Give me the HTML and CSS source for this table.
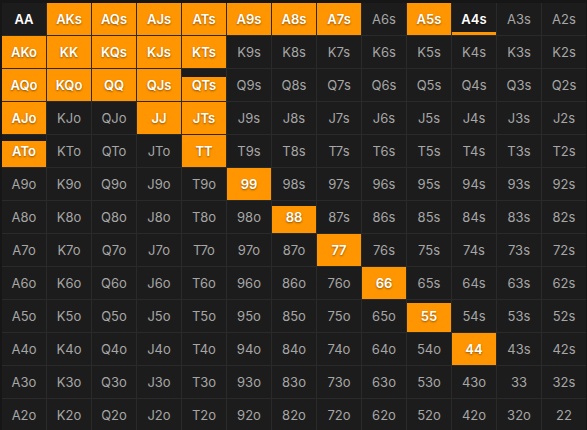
FILE: index.html
```html
<!DOCTYPE html>
<html lang="en">
<head>
<meta charset="utf-8">
<title>Range chart</title>
<link rel="stylesheet" href="styles.css">
</head>
<body>
<div class="wrap">
<div class="grid">
<div class="c hi"><span>AA</span></div>
<div class="c on"><span>AKs</span></div>
<div class="c on"><span>AQs</span></div>
<div class="c on"><span>AJs</span></div>
<div class="c on"><span>ATs</span></div>
<div class="c on"><span>A9s</span></div>
<div class="c on"><span>A8s</span></div>
<div class="c on"><span>A7s</span></div>
<div class="c"><span>A6s</span></div>
<div class="c on"><span>A5s</span></div>
<div class="c hi"><i class="fill" style="height:10%"></i><span>A4s</span></div>
<div class="c"><span>A3s</span></div>
<div class="c"><span>A2s</span></div>

<div class="c on"><span>AKo</span></div>
<div class="c on"><span>KK</span></div>
<div class="c on"><span>KQs</span></div>
<div class="c on"><span>KJs</span></div>
<div class="c on"><span>KTs</span></div>
<div class="c"><span>K9s</span></div>
<div class="c"><span>K8s</span></div>
<div class="c"><span>K7s</span></div>
<div class="c"><span>K6s</span></div>
<div class="c"><span>K5s</span></div>
<div class="c"><span>K4s</span></div>
<div class="c"><span>K3s</span></div>
<div class="c"><span>K2s</span></div>

<div class="c on"><span>AQo</span></div>
<div class="c on"><span>KQo</span></div>
<div class="c on"><span>QQ</span></div>
<div class="c on"><span>QJs</span></div>
<div class="c hi"><i class="fill" style="height:75%"></i><span>QTs</span></div>
<div class="c"><span>Q9s</span></div>
<div class="c"><span>Q8s</span></div>
<div class="c"><span>Q7s</span></div>
<div class="c"><span>Q6s</span></div>
<div class="c"><span>Q5s</span></div>
<div class="c"><span>Q4s</span></div>
<div class="c"><span>Q3s</span></div>
<div class="c"><span>Q2s</span></div>

<div class="c on"><span>AJo</span></div>
<div class="c"><span>KJo</span></div>
<div class="c"><span>QJo</span></div>
<div class="c on"><span>JJ</span></div>
<div class="c on"><span>JTs</span></div>
<div class="c"><span>J9s</span></div>
<div class="c"><span>J8s</span></div>
<div class="c"><span>J7s</span></div>
<div class="c"><span>J6s</span></div>
<div class="c"><span>J5s</span></div>
<div class="c"><span>J4s</span></div>
<div class="c"><span>J3s</span></div>
<div class="c"><span>J2s</span></div>

<div class="c hi"><i class="fill" style="height:80%"></i><span>ATo</span></div>
<div class="c"><span>KTo</span></div>
<div class="c"><span>QTo</span></div>
<div class="c"><span>JTo</span></div>
<div class="c on"><span>TT</span></div>
<div class="c"><span>T9s</span></div>
<div class="c"><span>T8s</span></div>
<div class="c"><span>T7s</span></div>
<div class="c"><span>T6s</span></div>
<div class="c"><span>T5s</span></div>
<div class="c"><span>T4s</span></div>
<div class="c"><span>T3s</span></div>
<div class="c"><span>T2s</span></div>

<div class="c"><span>A9o</span></div>
<div class="c"><span>K9o</span></div>
<div class="c"><span>Q9o</span></div>
<div class="c"><span>J9o</span></div>
<div class="c"><span>T9o</span></div>
<div class="c on"><span>99</span></div>
<div class="c"><span>98s</span></div>
<div class="c"><span>97s</span></div>
<div class="c"><span>96s</span></div>
<div class="c"><span>95s</span></div>
<div class="c"><span>94s</span></div>
<div class="c"><span>93s</span></div>
<div class="c"><span>92s</span></div>

<div class="c"><span>A8o</span></div>
<div class="c"><span>K8o</span></div>
<div class="c"><span>Q8o</span></div>
<div class="c"><span>J8o</span></div>
<div class="c"><span>T8o</span></div>
<div class="c"><span>98o</span></div>
<div class="c hi"><i class="fill" style="height:84%"></i><span>88</span></div>
<div class="c"><span>87s</span></div>
<div class="c"><span>86s</span></div>
<div class="c"><span>85s</span></div>
<div class="c"><span>84s</span></div>
<div class="c"><span>83s</span></div>
<div class="c"><span>82s</span></div>

<div class="c"><span>A7o</span></div>
<div class="c"><span>K7o</span></div>
<div class="c"><span>Q7o</span></div>
<div class="c"><span>J7o</span></div>
<div class="c"><span>T7o</span></div>
<div class="c"><span>97o</span></div>
<div class="c"><span>87o</span></div>
<div class="c on"><span>77</span></div>
<div class="c"><span>76s</span></div>
<div class="c"><span>75s</span></div>
<div class="c"><span>74s</span></div>
<div class="c"><span>73s</span></div>
<div class="c"><span>72s</span></div>

<div class="c"><span>A6o</span></div>
<div class="c"><span>K6o</span></div>
<div class="c"><span>Q6o</span></div>
<div class="c"><span>J6o</span></div>
<div class="c"><span>T6o</span></div>
<div class="c"><span>96o</span></div>
<div class="c"><span>86o</span></div>
<div class="c"><span>76o</span></div>
<div class="c on"><span>66</span></div>
<div class="c"><span>65s</span></div>
<div class="c"><span>64s</span></div>
<div class="c"><span>63s</span></div>
<div class="c"><span>62s</span></div>

<div class="c"><span>A5o</span></div>
<div class="c"><span>K5o</span></div>
<div class="c"><span>Q5o</span></div>
<div class="c"><span>J5o</span></div>
<div class="c"><span>T5o</span></div>
<div class="c"><span>95o</span></div>
<div class="c"><span>85o</span></div>
<div class="c"><span>75o</span></div>
<div class="c"><span>65o</span></div>
<div class="c hi"><i class="fill" style="height:90%"></i><span>55</span></div>
<div class="c"><span>54s</span></div>
<div class="c"><span>53s</span></div>
<div class="c"><span>52s</span></div>

<div class="c"><span>A4o</span></div>
<div class="c"><span>K4o</span></div>
<div class="c"><span>Q4o</span></div>
<div class="c"><span>J4o</span></div>
<div class="c"><span>T4o</span></div>
<div class="c"><span>94o</span></div>
<div class="c"><span>84o</span></div>
<div class="c"><span>74o</span></div>
<div class="c"><span>64o</span></div>
<div class="c"><span>54o</span></div>
<div class="c on"><span>44</span></div>
<div class="c"><span>43s</span></div>
<div class="c"><span>42s</span></div>

<div class="c"><span>A3o</span></div>
<div class="c"><span>K3o</span></div>
<div class="c"><span>Q3o</span></div>
<div class="c"><span>J3o</span></div>
<div class="c"><span>T3o</span></div>
<div class="c"><span>93o</span></div>
<div class="c"><span>83o</span></div>
<div class="c"><span>73o</span></div>
<div class="c"><span>63o</span></div>
<div class="c"><span>53o</span></div>
<div class="c"><span>43o</span></div>
<div class="c"><span>33</span></div>
<div class="c"><span>32s</span></div>

<div class="c"><span>A2o</span></div>
<div class="c"><span>K2o</span></div>
<div class="c"><span>Q2o</span></div>
<div class="c"><span>J2o</span></div>
<div class="c"><span>T2o</span></div>
<div class="c"><span>92o</span></div>
<div class="c"><span>82o</span></div>
<div class="c"><span>72o</span></div>
<div class="c"><span>62o</span></div>
<div class="c"><span>52o</span></div>
<div class="c"><span>42o</span></div>
<div class="c"><span>32o</span></div>
<div class="c"><span>22</span></div>
</div>
</div>
</body>
</html>
```

FILE: styles.css
```css
html, body {
  margin: 0;
  padding: 0;
  background: #161616;
  overflow: hidden;
}

.wrap {
  width: 587px;
  height: 430px;
  padding: 3px 0 0 2px;
  box-sizing: border-box;
  overflow: hidden;
}

.grid {
  display: grid;
  grid-template-columns: repeat(13, 44px);
  grid-auto-rows: 32px;
  gap: 1px;
  background: #2a2a2a;
  width: max-content;
}

.c {
  position: relative;
  background: #1c1c1c;
  display: flex;
  align-items: center;
  justify-content: center;
  font-family: Inter, "Noto Sans", sans-serif;
  font-size: 13px;
  font-weight: 400;
  color: #a6a6a6;
  overflow: hidden;
}

.c span {
  position: relative;
}

.c.on {
  background: #ff9500;
}

.c.on,
.c.hi {
  color: #ffffff;
  font-weight: 600;
}

.c.on span,
.fill ~ span {
  text-shadow: 0 1px 2px rgba(0, 0, 0, 0.45);
}

.fill {
  position: absolute;
  left: 0;
  right: 0;
  bottom: 0;
  background: #ff9500;
}
```
